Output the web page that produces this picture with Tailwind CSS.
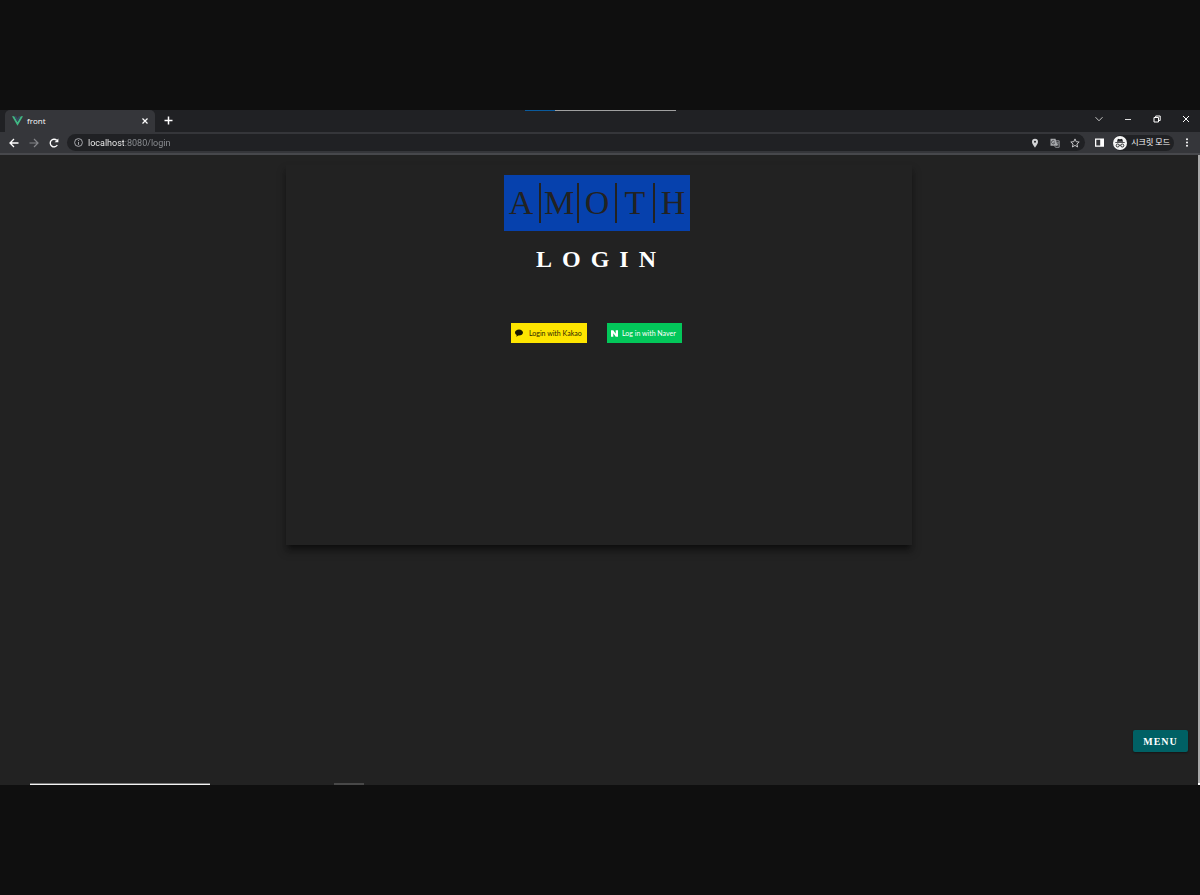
<!DOCTYPE html>
<html lang="ko">
<head>
<meta charset="utf-8">
<meta name="viewport" content="width=device-width, initial-scale=1">
<title>front</title>
<script src="https://cdn.jsdelivr.net/npm/@tailwindcss/browser@4"></script>
</head>
<body class="flex min-h-screen flex-col bg-[#0f0f0f] py-[110px] font-['Roboto','Noto_Sans_CJK_KR',sans-serif] text-white">
<div class="relative flex flex-1 flex-col bg-[#222222]">
  <div class="absolute inset-x-0 top-0 flex h-px justify-center" aria-hidden="true">
    <span class="w-[30px] bg-[#0a5a9c]"></span><span class="w-[121px] bg-[#a0a0a0]"></span>
  </div>

  <header>
    <div class="flex h-[22px] items-end bg-[#202124] pl-[5px]">
      <div class="flex h-[22px] w-[150px] items-center rounded-t-[5px] bg-[#35363a] pr-[6px] pb-px pl-[7px]">
        <svg class="h-[10px] w-[11px]" viewBox="0 0 22 19"><path fill="#41b883" d="M0 0h4.400L11 11.400 17.600 0H22L11 19z"/><path fill="#35495e" d="M4.400 0h4L11 4.500 13.600 0h4L11 11.400z"/></svg>
        <span class="ml-[4px] flex-1 font-['Open_Sans',sans-serif] text-[8px] leading-3">front</span>
        <button type="button" aria-label="Close tab" class="p-px"><svg class="h-[6px] w-[6px]" viewBox="0 0 6 6" fill="none" stroke="#fff" stroke-width="1.200"><path d="M.5.5l5 5m0-5l-5 5"/></svg></button>
      </div>
      <button type="button" aria-label="New tab" class="ml-[9px] flex h-[22px] items-center pb-px"><svg class="h-[9px] w-[9px]" viewBox="0 0 9 9" fill="none" stroke="#fff" stroke-width="1.500"><path d="M4.500.5v8m-4-4h8"/></svg></button>
      <div class="ml-auto flex h-full items-center pr-[10px] pb-[4px]">
        <button type="button" aria-label="Search tabs" class="w-[29px]"><svg class="mx-auto h-[8px] w-[8px]" viewBox="0 0 8 8" fill="none" stroke="#c4c4c4"><path d="M.5 2.200L4 5.800l3.500-3.600"/></svg></button>
        <button type="button" aria-label="Minimize" class="w-[29px]"><svg class="mx-auto h-[8px] w-[8px]" viewBox="0 0 8 8" stroke="#ddd"><path d="M1 4.500h6"/></svg></button>
        <button type="button" aria-label="Restore" class="w-[29px]"><svg class="mx-auto h-[8px] w-[8px]" viewBox="0 0 8 8" fill="none" stroke="#fff"><path d="M1 2.500h4.500V7H1zM2.700 2.500V1h4.500v4.500H5.500"/></svg></button>
        <button type="button" aria-label="Close" class="ml-[11px]"><svg class="h-[8px] w-[8px]" viewBox="0 0 8 8" fill="none" stroke="#fff"><path d="M1 1l6 6m0-6L1 7"/></svg></button>
      </div>
    </div>

    <div class="flex h-[23px] items-center border-b-2 border-[#47484c] bg-[#35363a] pr-[11px] pl-[9px]">
      <button type="button" aria-label="Back"><svg class="h-[10px] w-[10px]" viewBox="0 0 10 10" fill="none" stroke="#fff" stroke-width="1.300"><path d="M9.500 5H1M5 1L1 5l4 4"/></svg></button>
      <button type="button" aria-label="Forward" class="ml-[10px]"><svg class="h-[10px] w-[10px]" viewBox="0 0 10 10" fill="none" stroke="#85868a" stroke-width="1.200"><path d="M.5 5H9M5 1l4 4-4 4"/></svg></button>
      <button type="button" aria-label="Reload" class="ml-[10px]"><svg class="h-[10px] w-[10px]" viewBox="0 0 10 10" fill="none" stroke="#fff" stroke-width="1.400"><path d="M8.300 7A3.800 3.800 0 1 1 7.700 2.300"/><path d="M9.400.5v3.800H5.600z" fill="#fff" stroke="none"/></svg></button>
      <div class="ml-[8px] flex h-[17px] flex-1 items-center rounded-full bg-[#202124] pr-[5px] pl-[7px]">
        <svg class="h-[9px] w-[9px]" viewBox="0 0 9 9" fill="none" stroke="#b4b6ba" stroke-width=".9"><circle cx="4.500" cy="4.500" r="3.900"/><path d="M4.500 4v2.800M4.500 2.100v1"/></svg>
        <input type="text" aria-label="Address" value="localhost:8080/login" class="ml-[5px] h-[16px] min-w-0 flex-1 bg-linear-[90deg,#fff_36px,#8f9296_36px] bg-clip-text text-[9px] text-transparent outline-none">
        <div class="flex items-center gap-[10px]">
          <button type="button" aria-label="Location"><svg class="h-[10px] w-[10px]" viewBox="0 0 10 10"><path fill="#d2d3d5" fill-rule="evenodd" d="M5 .7a3 3 0 0 0-3 3C2 6 5 9.500 5 9.500S8 6 8 3.700a3 3 0 0 0-3-3zm0 2a1 1 0 1 1 0 2 1 1 0 0 1 0-2z"/></svg></button>
          <button type="button" aria-label="Translate"><svg class="h-[10px] w-[10px]" viewBox="0 0 10 10"><path fill="#a8aaad" d="M.5.700h5l2.200 7H.5z"/><path d="M4.500 2.800h4.700v6.500H5.500l-1-1.600" fill="none" stroke="#a8aaad" stroke-width=".8"/><path d="M4.600 3.200A1.700 1.700 0 1 0 4.700 5H3.300" fill="none" stroke="#303135" stroke-width=".7"/><path d="M6.500 4.700h2.200M8.300 4.800L6.800 7.500M7 5.700l1.600 1.600" fill="none" stroke="#a8aaad" stroke-width=".7"/></svg></button>
          <button type="button" aria-label="Bookmark"><svg class="h-[10px] w-[10px]" viewBox="0 0 10 10" fill="none" stroke="#d2d3d5" stroke-width=".9" stroke-linejoin="round"><path d="M5 .9l1.200 2.800 3 .3-2.300 2 .7 3L5 7.400 2.400 9l.7-3L.8 4l3-.3z"/></svg></button>
        </div>
      </div>
      <button type="button" aria-label="Side panel" class="ml-[10px]"><svg class="h-[9px] w-[9px]" viewBox="0 0 9 9"><path fill="#fff" fill-rule="evenodd" d="M0 .5h9v8.200H0zM1.300 1.800v5.600h3.900V1.800z"/></svg></button>
      <button type="button" class="ml-[9px] flex h-[16px] items-center gap-[4px] rounded-full bg-[#202124] pr-[4px]">
        <svg class="h-[14px] w-[14px]" viewBox="0 0 14 14"><circle cx="7" cy="7" r="7" fill="#f5f5f5"/><path fill="#202124" d="M4.900 2.700l2.100.5 2.100-.5 1 3H3.900zM2.300 6.200h9.400v.9H2.300z"/><g fill="none" stroke="#202124" stroke-width=".9"><circle cx="4.700" cy="9.500" r="1.500"/><circle cx="9.300" cy="9.500" r="1.500"/><path d="M6.200 9.300q.8-.5 1.600 0"/></g></svg>
        <span class="text-[8px] leading-3">시크릿 모드</span>
      </button>
      <button type="button" aria-label="Browser menu" class="ml-[11px]"><svg class="h-[9px] w-[4px]" viewBox="0 0 4 9" fill="#fff"><circle cx="2" cy="1.200" r="1"/><circle cx="2" cy="4.500" r="1"/><circle cx="2" cy="7.800" r="1"/></svg></button>
    </div>
  </header>

  <div class="flex flex-1 border-r-2 border-[#a9a9a9]">
    <main class="flex flex-1 flex-col items-center pt-[10px]">
      <section class="flex min-h-[380px] w-full max-w-[626px] flex-col items-center bg-[#222222] pt-[10px] shadow-[0_5px_5px_-3px_rgba(0,0,0,0.5),0_6px_8px_1px_rgba(0,0,0,0.3)]">
        <a href="#" aria-label="AMOTH" class="mr-[4px] flex h-[56px] w-[186px] items-center justify-center bg-[#0641ad] font-['Liberation_Serif',serif] text-[34px] leading-[40px] text-[#222222]">
          <span class="w-[36px] shrink-0 text-center">A</span><i class="h-[40px] w-[2px] shrink-0 bg-[#222222]"></i>
          <span class="w-[36px] shrink-0 text-center">M</span><i class="h-[40px] w-[2px] shrink-0 bg-[#222222]"></i>
          <span class="w-[36px] shrink-0 text-center">O</span><i class="h-[40px] w-[2px] shrink-0 bg-[#222222]"></i>
          <span class="w-[36px] shrink-0 text-center">T</span><i class="h-[40px] w-[2px] shrink-0 bg-[#222222]"></i>
          <span class="w-[36px] shrink-0 text-center">H</span>
        </a>
        <h1 class="mt-[12px] pl-[4px] font-['Liberation_Serif',serif] text-[24px] leading-[32px] font-bold tracking-[10px]">LOGIN</h1>
        <div class="mt-[48px] mr-[5px] flex gap-[20px] font-['Lato',sans-serif] text-[7px]">
          <button type="button" class="flex h-[20px] w-[76px] items-center bg-[#fee500] pl-[4px] text-[#2b2700]">
            <svg class="h-[8px] w-[8px]" viewBox="0 0 8 8"><path fill="#181600" d="M4 .4C1.800.4 0 1.700 0 3.500c0 1.100.7 2 1.700 2.600l-.4 1.700 2-1.300H4c2.200 0 4-1.300 4-3S6.200.4 4 .4z"/></svg>
            <span class="ml-[6px] whitespace-nowrap">Login with Kakao</span>
          </button>
          <button type="button" class="flex h-[20px] w-[75px] items-center bg-[#03c75a] pl-[4px]">
            <svg class="h-[7px] w-[7px]" viewBox="0 0 7 7"><path fill="#fff" d="M0 .2h2.300l2.400 3.500V.2H7v6.600H4.700L2.300 3.300v3.500H0z"/></svg>
            <span class="ml-[4px] whitespace-nowrap">Log in with Naver</span>
          </button>
        </div>
      </section>
      <button type="button" class="mt-auto mr-[10px] mb-[31px] h-[22px] w-[55px] self-end rounded-[2px] bg-[#006064] font-['Liberation_Serif',serif] text-[10px] font-bold tracking-[1px] shadow-[0_1px_2px_rgba(0,0,0,0.4)]">MENU</button>
    </main>
  </div>
  <div class="flex h-[2px] pl-[30px]" aria-hidden="true">
    <span class="w-[180px] border-b border-[#f3f3f3] bg-[#777]"></span>
    <span class="ml-[124px] w-[30px] bg-[#484848]"></span>
    <span class="ml-auto w-[2px] bg-white"></span>
  </div>
</div>
</body>
</html>
